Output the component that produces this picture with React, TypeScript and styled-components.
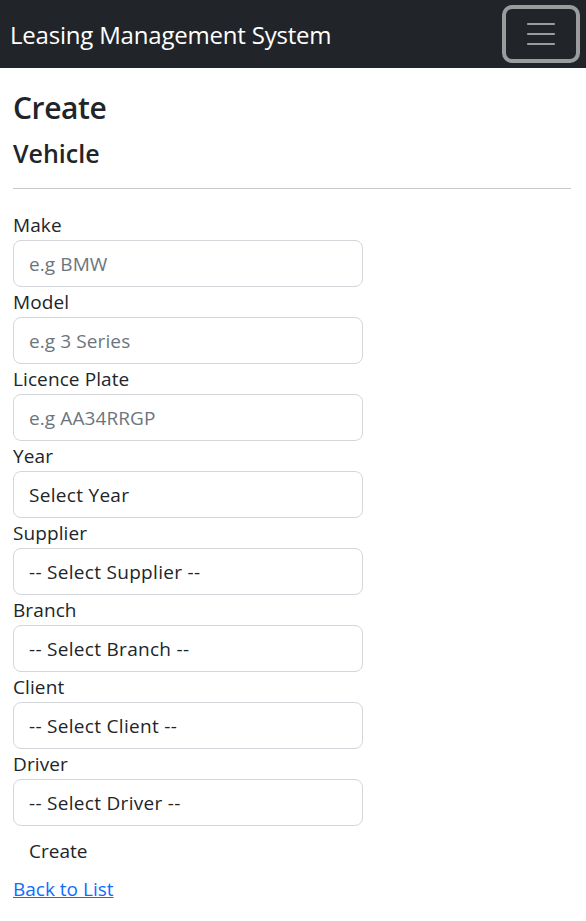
import React from "react";
import styled, { createGlobalStyle } from "styled-components";

const Global = createGlobalStyle`
  html, body { margin: 0; padding: 0; background: #fff; }
  body { font-family: "Open Sans", "Noto Sans", sans-serif; color: #212529; }
  * { box-sizing: border-box; }
`;

const NavBar = styled.nav`
  height: 68px;
  background: #212529;
  display: flex;
  align-items: center;
  justify-content: space-between;
  padding: 0 6px 0 10px;
`;

const Brand = styled.a`
  color: #fff;
  font-size: 24px;
  text-decoration: none;
  letter-spacing: -0.2px;
`;

const Toggler = styled.button`
  width: 78px;
  height: 58px;
  border: 4px solid #9b9c9e;
  border-radius: 10px;
  background: transparent;
  display: flex;
  align-items: center;
  justify-content: center;
  padding: 0;
`;

const Main = styled.main`
  padding: 21px 15px 0 13px;
`;

const Title = styled.h1`
  margin: 0;
  font-size: 30px;
  font-weight: 600;
  line-height: 37px;
  letter-spacing: -0.4px;
`;

const SubTitle = styled.h4`
  margin: 13px 0 0;
  font-size: 25px;
  font-weight: 600;
  line-height: 28px;
  letter-spacing: 0;
`;

const Rule = styled.hr`
  margin: 21px 0 21px;
  border: 0;
  border-top: 1px solid #c8c9ca;
`;

const Form = styled.form`
  display: flex;
  flex-direction: column;
  width: 350px;
`;

const Label = styled.label`
  display: block;
  font-size: 19px;
  line-height: 30px;
  letter-spacing: 0.1px;
`;

const Input = styled.input`
  display: block;
  width: 100%;
  height: 47px;
  padding: 0 15px;
  font-family: inherit;
  font-size: 19px;
  color: #212529;
  border: 1px solid #d3d6db;
  border-radius: 8px;
  background: #fff;
  letter-spacing: 0.1px;
  &::placeholder { color: #6c757d; opacity: 1; }
`;

const Select = styled.select`
  display: block;
  width: 100%;
  height: 47px;
  padding: 0 15px;
  font-family: inherit;
  font-size: 19px;
  color: #212529;
  border: 1px solid #d3d6db;
  border-radius: 8px;
  background: #fff;
  appearance: none;
  letter-spacing: 0.3px;
`;

const SubmitButton = styled.button`
  align-self: flex-start;
  margin-top: 10px;
  padding: 0 16px;
  height: 30px;
  line-height: 30px;
  border: 0;
  background: transparent;
  font-family: inherit;
  font-size: 19px;
  color: #212529;
`;

const BackLink = styled.a`
  display: inline-block;
  margin-top: 8px;
  font-size: 19px;
  line-height: 30px;
  color: #0d6efd;
  text-decoration: underline;
`;

const MenuIcon = () => (
  <svg width="30" height="24" viewBox="0 0 30 24">
    <g stroke="#9b9c9e" strokeWidth="2.2" strokeLinecap="round">
      <line x1="2" y1="2" x2="28" y2="2" />
      <line x1="2" y1="12" x2="28" y2="12" />
      <line x1="2" y1="22" x2="28" y2="22" />
    </g>
  </svg>
);

const textFields = [
  { id: "make", label: "Make", ph: "e.g BMW" },
  { id: "model", label: "Model", ph: "e.g 3 Series" },
  { id: "plate", label: "Licence Plate", ph: "e.g AA34RRGP" },
];

const selectFields = [
  { id: "year", label: "Year", opt: "Select Year" },
  { id: "supplier", label: "Supplier", opt: "-- Select Supplier --" },
  { id: "branch", label: "Branch", opt: "-- Select Branch --" },
  { id: "client", label: "Client", opt: "-- Select Client --" },
  { id: "driver", label: "Driver", opt: "-- Select Driver --" },
];

export default function App() {
  return (
    <>
      <Global />
      <NavBar>
        <Brand href="#">Leasing Management System</Brand>
        <Toggler aria-label="Toggle navigation">
          <MenuIcon />
        </Toggler>
      </NavBar>
      <Main>
        <Title>Create</Title>
        <SubTitle>Vehicle</SubTitle>
        <Rule />
        <Form onSubmit={(e) => e.preventDefault()}>
          {textFields.map((f) => (
            <div key={f.id}>
              <Label htmlFor={f.id}>{f.label}</Label>
              <Input id={f.id} placeholder={f.ph} />
            </div>
          ))}
          {selectFields.map((f) => (
            <div key={f.id}>
              <Label htmlFor={f.id}>{f.label}</Label>
              <Select id={f.id} defaultValue="">
                <option value="">{f.opt}</option>
              </Select>
            </div>
          ))}
          <SubmitButton type="submit">Create</SubmitButton>
        </Form>
        <BackLink href="#">Back to List</BackLink>
      </Main>
    </>
  );
}
